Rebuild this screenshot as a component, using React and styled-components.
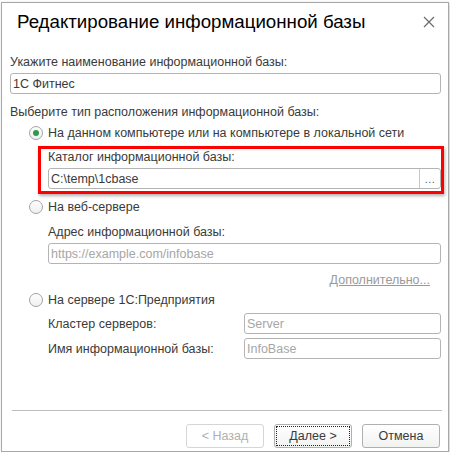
import React from 'react'
import styled, { createGlobalStyle } from 'styled-components'

const Global = createGlobalStyle`
  html, body {
    margin: 0;
    padding: 0;
    background: #fff;
  }
  body {
    font-family: "Liberation Sans", Arial, sans-serif;
    font-size: 12.5px;
    color: #3a3a3a;
  }
`

const Window = styled.div`
  box-sizing: border-box;
  margin: 2px 0 0 1px;
  width: 448px;
  height: 450px;
  border: 1px solid #a8a8a8;
  box-shadow: 1px 1px 3px rgba(0, 0, 0, 0.22);
  background: #fff;
  display: flex;
  flex-direction: column;
`

const Header = styled.div`
  display: flex;
  align-items: center;
  justify-content: space-between;
  padding: 7px 12px 0 15px;
`

const Title = styled.h1`
  margin: 0;
  font-size: 18.7px;
  line-height: 24px;
  font-weight: normal;
  color: #000;
`

const Close = styled.button`
  border: 0;
  background: none;
  padding: 0;
  width: 14px;
  height: 14px;
  display: flex;
  cursor: pointer;
`

const Body = styled.div`
  flex: 1;
  display: flex;
  flex-direction: column;
  padding: 20px 7px 0 8px;
`

const Label = styled.div`
  line-height: 16px;
  margin-top: ${p => p.$mt || 0}px;
  white-space: nowrap;
`

const Field = styled.div`
  box-sizing: border-box;
  height: 21px;
  margin-top: ${p => p.$mt || 0}px;
  border: 1px solid #b4b4b4;
  border-radius: 3px;
  display: flex;
  align-items: center;
  background: #fff;
  width: ${p => (p.$w ? `${p.$w}px` : 'auto')};
`

const FieldText = styled.span`
  flex: 1;
  padding-left: 2px;
  color: ${p => (p.$placeholder ? '#a6a6a6' : '#3a3a3a')};
  white-space: nowrap;
  overflow: hidden;
`

const PickButton = styled.span`
  width: 20px;
  align-self: stretch;
  border-left: 1px solid #c8c8c8;
  display: flex;
  align-items: center;
  justify-content: center;
  font-size: 11px;
  color: #555;
  letter-spacing: 0.5px;
`

const RadioRow = styled.label`
  display: flex;
  align-items: center;
  gap: 5px;
  margin: ${p => p.$mt || 0}px 0 0 19px;
  line-height: 16px;
`

const RadioCircle = styled.span`
  box-sizing: border-box;
  width: 14px;
  height: 14px;
  border-radius: 50%;
  border: 1px solid #a4a4a4;
  background: linear-gradient(#fdfdfd, #f0f0f0);
  display: flex;
  align-items: center;
  justify-content: center;

  &::after {
    content: '';
    width: 6px;
    height: 6px;
    border-radius: 50%;
    background: ${p => (p.$checked ? '#2c9a48' : 'transparent')};
  }
`

const Indent = styled.div`
  display: flex;
  flex-direction: column;
  margin-left: 38px;
`

const Highlight = styled.div`
  display: flex;
  flex-direction: column;
  margin: 5px -3px 0 -10px;
  padding: 0 0 2px 7px;
  border: 3px solid #f00;
  box-shadow: 1px 2px 3px rgba(0, 0, 0, 0.3);
`

const MoreLink = styled.a`
  align-self: flex-end;
  margin: 8px 11px 0 0;
  line-height: 16px;
  color: #9a9a9a;
  text-decoration: underline;
`

const Row = styled.div`
  display: flex;
  align-items: center;
  justify-content: space-between;
  margin-top: ${p => p.$mt || 0}px;
`

const Spacer = styled.div`
  flex: 1;
`

const Separator = styled.hr`
  margin: 0 0 0 2px;
  border: 0;
  border-top: 1px solid #bdbdbd;
  width: 430px;
`

const Footer = styled.div`
  display: flex;
  justify-content: flex-end;
  gap: 10px;
  padding: 13px 1px 3px 0;
`

const Button = styled.button`
  position: relative;
  box-sizing: border-box;
  width: 78px;
  height: 24px;
  font-family: inherit;
  font-size: 12.5px;
  border-radius: 3px;
  border: 1px solid ${p => (p.disabled ? '#d6d6d6' : '#b0b0b0')};
  background: ${p => (p.disabled ? '#fff' : 'linear-gradient(#ffffff, #f1f3f1)')};
  color: ${p => (p.disabled ? '#b0b0b0' : '#3a3a3a')};
  padding: 0;

  &::after {
    content: '';
    display: ${p => (p.$focus ? 'block' : 'none')};
    position: absolute;
    inset: 1px;
    border: 1px dotted #222;
  }
`

export default function App() {
  return (
    <>
      <Global />
      <Window>
        <Header>
          <Title>Редактирование информационной базы</Title>
          <Close aria-label="Закрыть">
            <svg width="14" height="14" viewBox="0 0 14 14">
              <path d="M2 2 L12 12 M12 2 L2 12" stroke="#6a6a6a" strokeWidth="1.2" />
            </svg>
          </Close>
        </Header>
        <Body>
          <Label>Укажите наименование информационной базы:</Label>
          <Field $mt={3}>
            <FieldText>1С Фитнес</FieldText>
          </Field>
          <Label $mt={10}>Выберите тип расположения информационной базы:</Label>
          <RadioRow $mt={5}>
            <RadioCircle $checked />
            На данном компьютере или на компьютере в локальной сети
          </RadioRow>
          <Indent>
            <Highlight>
              <Label>Каталог информационной базы:</Label>
              <Field $mt={3}>
                <FieldText>C:\temp\1cbase</FieldText>
                <PickButton>...</PickButton>
              </Field>
            </Highlight>
          </Indent>
          <RadioRow $mt={5}>
            <RadioCircle />
            На веб-сервере
          </RadioRow>
          <Indent>
            <Label $mt={9}>Адрес информационной базы:</Label>
            <Field $mt={3}>
              <FieldText $placeholder>https://example.com/infobase</FieldText>
            </Field>
            <MoreLink>Дополнительно...</MoreLink>
          </Indent>
          <RadioRow $mt={4}>
            <RadioCircle />
            На сервере 1С:Предприятия
          </RadioRow>
          <Indent>
            <Row $mt={5}>
              <Label>Кластер серверов:</Label>
              <Field $w={197}>
                <FieldText $placeholder>Server</FieldText>
              </Field>
            </Row>
            <Row $mt={4}>
              <Label>Имя информационной базы:</Label>
              <Field $w={197}>
                <FieldText $placeholder>InfoBase</FieldText>
              </Field>
            </Row>
          </Indent>
          <Spacer />
          <Separator />
          <Footer>
            <Button disabled>&lt; Назад</Button>
            <Button $focus>Далее &gt;</Button>
            <Button>Отмена</Button>
          </Footer>
        </Body>
      </Window>
    </>
  )
}
